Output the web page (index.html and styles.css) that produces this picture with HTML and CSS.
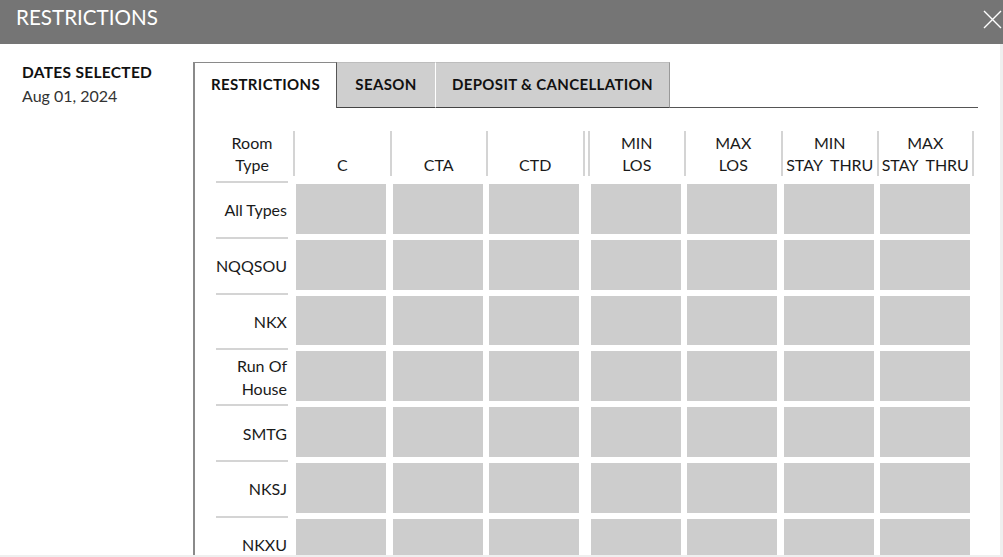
FILE: index.html
```html
<!DOCTYPE html>
<html lang="en">
<head>
<meta charset="utf-8">
<title>Restrictions</title>
<link rel="stylesheet" href="styles.css">
</head>
<body>
<div class="modal">
  <header class="modal-header">
    <span class="modal-title">RESTRICTIONS</span>
    <button class="close-btn" aria-label="Close">
      <svg width="19" height="19" viewBox="0 0 19 19"><path d="M1 1 L18 18 M18 1 L1 18" stroke="#fff" stroke-width="1.4" fill="none"/></svg>
    </button>
  </header>
  <div class="modal-body">
    <aside class="dates">
      <div class="dates-label">DATES SELECTED</div>
      <div class="dates-value">Aug 01, 2024</div>
    </aside>
    <section class="panel">
      <nav class="tabs">
        <div class="tab tab-active tab-restrictions">RESTRICTIONS</div>
        <div class="tab tab-season">SEASON</div>
        <div class="tab tab-deposit">DEPOSIT &amp; CANCELLATION</div>
        <div class="tab-fill"></div>
      </nav>
      <div class="tab-content">
        <table class="grid">
          <colgroup>
            <col class="c-label"><col class="c-data"><col class="c-data"><col class="c-data"><col class="c-spacer"><col class="c-data"><col class="c-data"><col class="c-data"><col class="c-data">
          </colgroup>
          <thead>
            <tr>
              <th><div class="th-in th-label">Room<br>Type</div></th>
              <th><div class="th-in">C</div></th>
              <th><div class="th-in">CTA</div></th>
              <th><div class="th-in">CTD</div></th>
              <th><div class="th-in th-spacer"></div></th>
              <th><div class="th-in">MIN<br>LOS</div></th>
              <th><div class="th-in">MAX<br>LOS</div></th>
              <th><div class="th-in">MIN<br>STAY&nbsp; THRU</div></th>
              <th><div class="th-in th-last">MAX<br>STAY&nbsp; THRU</div></th>
            </tr>
          </thead>
          <tbody>
            <tr>
              <td class="lbl"><div class="lbl-in">All Types</div></td>
              <td><div class="box"></div></td><td><div class="box"></div></td><td><div class="box"></div></td><td class="sp"></td>
              <td><div class="box"></div></td><td><div class="box"></div></td><td><div class="box"></div></td><td><div class="box"></div></td>
            </tr>
            <tr>
              <td class="lbl"><div class="lbl-in">NQQSOU</div></td>
              <td><div class="box"></div></td><td><div class="box"></div></td><td><div class="box"></div></td><td class="sp"></td>
              <td><div class="box"></div></td><td><div class="box"></div></td><td><div class="box"></div></td><td><div class="box"></div></td>
            </tr>
            <tr>
              <td class="lbl"><div class="lbl-in">NKX</div></td>
              <td><div class="box"></div></td><td><div class="box"></div></td><td><div class="box"></div></td><td class="sp"></td>
              <td><div class="box"></div></td><td><div class="box"></div></td><td><div class="box"></div></td><td><div class="box"></div></td>
            </tr>
            <tr>
              <td class="lbl"><div class="lbl-in">Run Of<br>House</div></td>
              <td><div class="box"></div></td><td><div class="box"></div></td><td><div class="box"></div></td><td class="sp"></td>
              <td><div class="box"></div></td><td><div class="box"></div></td><td><div class="box"></div></td><td><div class="box"></div></td>
            </tr>
            <tr>
              <td class="lbl"><div class="lbl-in">SMTG</div></td>
              <td><div class="box"></div></td><td><div class="box"></div></td><td><div class="box"></div></td><td class="sp"></td>
              <td><div class="box"></div></td><td><div class="box"></div></td><td><div class="box"></div></td><td><div class="box"></div></td>
            </tr>
            <tr>
              <td class="lbl"><div class="lbl-in">NKSJ</div></td>
              <td><div class="box"></div></td><td><div class="box"></div></td><td><div class="box"></div></td><td class="sp"></td>
              <td><div class="box"></div></td><td><div class="box"></div></td><td><div class="box"></div></td><td><div class="box"></div></td>
            </tr>
            <tr>
              <td class="lbl"><div class="lbl-in">NKXU</div></td>
              <td><div class="box"></div></td><td><div class="box"></div></td><td><div class="box"></div></td><td class="sp"></td>
              <td><div class="box"></div></td><td><div class="box"></div></td><td><div class="box"></div></td><td><div class="box"></div></td>
            </tr>
          </tbody>
        </table>
      </div>
    </section>
  </div>
</div>
</body>
</html>
```
FILE: styles.css
```css
* { box-sizing: border-box; }

html, body {
  margin: 0;
  padding: 0;
  background: #efefef;
  overflow: hidden;
}

body {
  width: 1003px;
  height: 557px;
  font-family: Lato, "Open Sans", sans-serif;
  color: #222;
}

.modal {
  width: 1003px;
  height: 557px;
  display: flex;
  flex-direction: column;
}

.modal-header {
  height: 44px;
  flex: 0 0 44px;
  background: #757575;
  display: flex;
  justify-content: space-between;
  align-items: flex-start;
  padding: 5px 1px 0 16px;
}

.modal-title {
  color: #fff;
  font-size: 20.6px;
  line-height: 24px;
}

.close-btn {
  margin-top: 5px;
  padding: 0;
  border: 0;
  background: transparent;
  width: 19px;
  height: 19px;
  display: block;
}

.close-btn svg { display: block; }

.modal-body {
  width: 1000px;
  height: 511px;
  background: #fff;
  display: flex;
  overflow: hidden;
}

.dates {
  width: 193px;
  flex: 0 0 193px;
  padding: 18px 0 0 22px;
}

.dates-label {
  font-weight: 700;
  font-size: 15.5px;
  letter-spacing: 0.3px;
  line-height: 20px;
  color: #111;
}

.dates-value {
  margin-top: 4px;
  font-size: 16px;
  line-height: 20px;
  color: #333;
}

.panel {
  width: 785px;
  flex: 0 0 785px;
  padding-top: 18px;
  display: flex;
  flex-direction: column;
}

.tabs {
  display: flex;
  height: 46px;
  flex: 0 0 46px;
}

.tab {
  display: flex;
  align-items: center;
  justify-content: center;
  font-weight: 700;
  font-size: 15px;
  letter-spacing: 0.35px;
  color: #111;
  padding-bottom: 3px;
}

.tab-active {
  width: 144px;
  background: #fff;
  border: 2px solid #8a8a8a;
  border-top-width: 1px;
  border-right: 1px solid #555;
  border-bottom: 0;
}

.tab-season {
  width: 99px;
  background: #cfcfcf;
  border-top: 1px solid #bdbdbd;
  border-bottom: 1px solid #444;
  border-right: 1px solid #fff;
}

.tab-deposit {
  width: 234px;
  background: #cfcfcf;
  border-top: 1px solid #bdbdbd;
  border-right: 1px solid #999;
  border-bottom: 1px solid #444;
}

.tab-fill {
  flex: 1;
  border-bottom: 1px solid #555;
}

.tab-content {
  flex: 1;
  border-left: 2px solid #8a8a8a;
  padding: 23px 0 0 21px;
}

.grid {
  border-collapse: separate;
  border-spacing: 0;
  table-layout: fixed;
  width: 757.5px;
}

.c-label { width: 77px; }
.c-data { width: 96.5px; }
.c-spacer { width: 5px; }

.grid th {
  padding: 0 0 5px 0;
  font-weight: 400;
  vertical-align: top;
}

.th-in {
  height: 45px;
  border-left: 2px solid #d4d4d4;
  display: flex;
  flex-direction: column;
  justify-content: flex-end;
  align-items: center;
  text-align: center;
  font-size: 16px;
  line-height: 22px;
  color: #1a1a1a;
  white-space: nowrap;
}

.th-label {
  border-left: 0;
  width: 72px;
}

.th-last {
  border-right: 2px solid #d4d4d4;
}

.grid td {
  padding: 3px 3.5px 3px 3px;
  vertical-align: top;
}

.grid td.lbl {
  padding: 0 5px 0 0;
}

.grid td.sp {
  padding: 0;
}

.lbl-in {
  height: 55.8px;
  border-top: 2px solid #d4d4d4;
  display: flex;
  align-items: center;
  justify-content: flex-end;
  text-align: right;
  font-size: 16px;
  line-height: 23px;
  color: #1a1a1a;
  padding-right: 1px;
}

.box {
  height: 49.8px;
  background: #cdcdcd;
}
```
